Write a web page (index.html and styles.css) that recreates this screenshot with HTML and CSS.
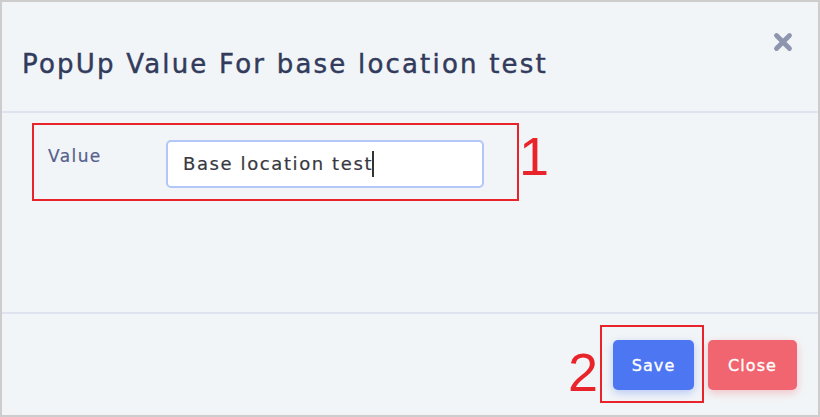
FILE: index.html
```html
<!DOCTYPE html>
<html>
<head>
<meta charset="utf-8">
<link rel="stylesheet" href="styles.css">
</head>
<body>
<div class="modal">
  <div class="modal-header">
    <h1 class="title">PopUp Value For base location test</h1>
    <span class="close-x" aria-label="close">
      <svg width="22" height="22" viewBox="0 0 22 22"><path d="M4.5 4.5 L17.5 17.5 M17.5 4.5 L4.5 17.5" stroke="#8e95ae" stroke-width="4.8" stroke-linecap="round"/></svg>
    </span>
  </div>
  <div class="modal-body">
    <div class="annot-row">
      <div class="annot annot-form">
        <label class="field-label">Value</label>
        <div class="input">Base location test<span class="caret"></span></div>
      </div>
      <span class="num num-1">1</span>
    </div>
  </div>
  <div class="modal-footer">
    <span class="num num-2">2</span>
    <div class="annot annot-btn">
      <button class="btn btn-save">Save</button>
    </div>
    <button class="btn btn-close">Close</button>
  </div>
</div>
</body>
</html>
```

FILE: styles.css
```css
* { box-sizing: border-box; }
html, body { margin: 0; padding: 0; }
body {
  width: 820px;
  height: 417px;
  font-family: "DejaVu Sans", "Open Sans", sans-serif;
  background: #f2f5f7;
}
.modal {
  width: 820px;
  height: 417px;
  border: 2px solid #cdcdcd;
  background: #f2f5f7;
  display: flex;
  flex-direction: column;
}
.modal-header {
  height: 111px;
  display: flex;
  justify-content: space-between;
  align-items: flex-start;
  padding: 0 24px 0 20px;
  border-bottom: 2px solid #dfe3ef;
}
.title {
  margin: 44px 0 0 0;
  font-size: 26px;
  line-height: 36px;
  font-weight: 400;
  color: #323b5c;
  letter-spacing: 2.2px;
  white-space: nowrap;
  -webkit-text-stroke: 0.45px #323b5c;
}
.close-x {
  margin-top: 29px;
  display: block;
  width: 22px;
  height: 22px;
}
.close-x svg { display: block; }
.modal-body {
  height: 201px;
  border-bottom: 2px solid #dfe3ef;
  padding: 10px 0 0 30px;
}
.annot-row {
  display: flex;
  align-items: flex-start;
}
.annot {
  border: 2px solid #e8232a;
}
.annot-form {
  width: 487px;
  height: 78px;
  display: flex;
  align-items: flex-start;
  padding: 15px 0 0 14px;
}
.field-label {
  width: 118px;
  font-size: 17px;
  line-height: 24px;
  margin-top: 4px;
  color: #56608e;
  letter-spacing: 1.4px;
  -webkit-text-stroke: 0.2px #56608e;
}
.input {
  width: 318px;
  height: 48px;
  background: #ffffff;
  border: 2px solid #b2c6f7;
  border-radius: 5px;
  padding: 0 0 0 15px;
  font-size: 18px;
  line-height: 44px;
  color: #373840;
  letter-spacing: 1.6px;
  -webkit-text-stroke: 0.2px #373840;
  display: flex;
  align-items: center;
}
.caret {
  display: inline-block;
  width: 1.5px;
  height: 26px;
  background: #333;
  margin-left: -1px;
}
.num {
  font-family: "Liberation Sans", Arial, sans-serif;
  color: #e8232a;
  font-size: 54px;
  line-height: 1;
  font-weight: 400;
}
.num-1 {
  margin: 6px 0 0 0;
}
.modal-footer {
  flex: 1;
  display: flex;
  justify-content: flex-end;
  align-items: flex-start;
  padding: 11px 21px 0 0;
}
.num-2 {
  margin: 20px 2px 0 0;
}
.annot-btn {
  width: 104px;
  height: 78px;
  padding: 13px 0 0 11px;
  margin-right: 4px;
}
.btn {
  border: none;
  height: 50px;
  border-radius: 5px;
  color: #ffffff;
  font-family: "DejaVu Sans", "Open Sans", sans-serif;
  font-size: 16px;
  font-weight: 400;
  letter-spacing: 1.1px;
  padding: 0;
  cursor: pointer;
  -webkit-text-stroke: 0.35px #ffffff;
}
.btn-save {
  width: 81px;
  background: #4d76f2;
  box-shadow: 0 3px 8px rgba(77, 118, 242, 0.35);
}
.btn-close {
  width: 89px;
  margin-top: 15px;
  background: #f0656f;
  box-shadow: 0 3px 8px rgba(240, 101, 111, 0.35);
}
```
